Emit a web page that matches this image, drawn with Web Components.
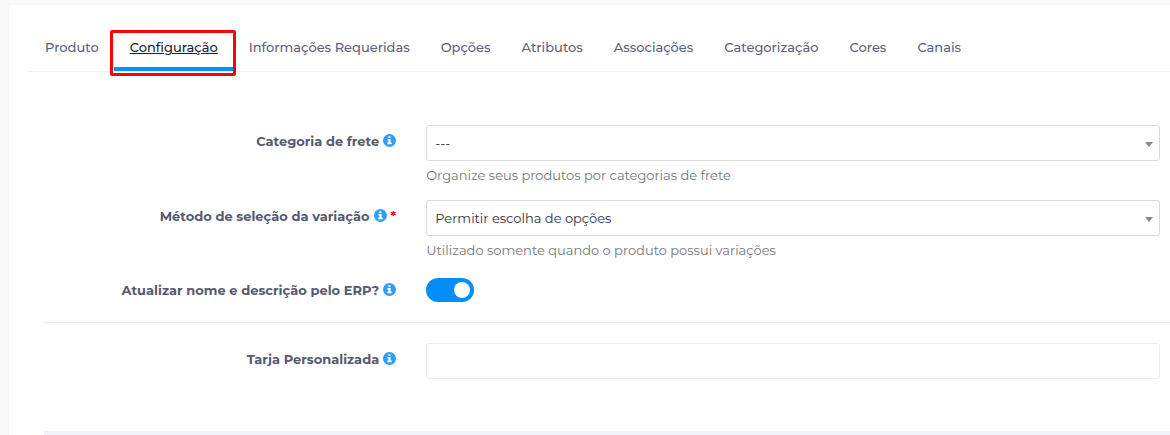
<!DOCTYPE html>
<html lang="pt-BR">
<head>
  <meta charset="utf-8">
  <meta name="viewport" content="width=device-width, initial-scale=1">
  <title>Produto - Configuração</title>
  <style>
    body {
      margin: 0;
      background-color: #f9f9f9;
      color: #575970;
      font-family: Montserrat, Inter, "Open Sans", sans-serif;
      font-size: 13px;
      line-height: 20px;
    }
  </style>
</head>
<body>
  <product-card>
    <tab-bar slot="tabs">
      <tab-link>Produto</tab-link>
      <tab-link active>Configuração</tab-link>
      <tab-link>Informações Requeridas</tab-link>
      <tab-link>Opções</tab-link>
      <tab-link>Atributos</tab-link>
      <tab-link>Associações</tab-link>
      <tab-link>Categorização</tab-link>
      <tab-link>Cores</tab-link>
      <tab-link>Canais</tab-link>
    </tab-bar>
    <form-field type="select" label="Categoria de frete" value="---" help="Organize seus produtos por categorias de frete"></form-field>
    <form-field type="select" label="Método de seleção da variação" value="Permitir escolha de opções" help="Utilizado somente quando o produto possui variações" required></form-field>
    <form-field type="switch" label="Atualizar nome e descrição pelo ERP?"></form-field>
    <form-divider></form-divider>
    <form-field type="text" label="Tarja Personalizada"></form-field>
  </product-card>

  <script>
    class ProductCard extends HTMLElement {
      constructor() {
        super();
        this.attachShadow({ mode: 'open' });
        this.shadowRoot.innerHTML = `
          <style>
            :host {
              display: block;
              margin: 5px 0 0 9px;
              padding-top: 25px;
              background-color: #fff;
            }

            form {
              display: flex;
              flex-direction: column;
              margin: 0 0 0 35px;
              padding: 53px 0 52px;
            }

            footer {
              height: 4px;
              margin-left: 35px;
              background-color: #f0f3f7;
            }
          </style>
          <slot name="tabs"></slot>
          <form><slot></slot></form>
          <footer></footer>
        `;
      }
    }

    class TabBar extends HTMLElement {
      constructor() {
        super();
        this.attachShadow({ mode: 'open' });
        this.shadowRoot.innerHTML = `
          <style>
            :host {
              display: block;
              margin-left: 20px;
            }

            nav {
              display: flex;
              border-bottom: 1px solid #f1f1f3;
            }
          </style>
          <nav><slot></slot></nav>
        `;
      }
    }

    class TabLink extends HTMLElement {
      constructor() {
        super();
        this.attachShadow({ mode: 'open' });
        this.shadowRoot.innerHTML = `
          <style>
            :host {
              display: block;
              position: relative;
            }

            a {
              display: block;
              padding: 7px 15px 10px 16px;
              border-bottom: 4px solid transparent;
              color: #5f6279;
              font-weight: 500;
              text-decoration: none;
              white-space: nowrap;
            }

            :host([active]) a {
              border-color: #0591fc;
              color: #1c1d2b;
              text-decoration: underline;
            }

            :host([active])::after {
              content: "";
              position: absolute;
              inset: 0 -3px -5px -4px;
              border: 3px solid #f00;
              border-radius: 2px;
              pointer-events: none;
            }
          </style>
          <a href="#"><slot></slot></a>
        `;
      }
    }

    class InfoIcon extends HTMLElement {
      constructor() {
        super();
        this.attachShadow({ mode: 'open' });
        this.shadowRoot.innerHTML = `
          <style>
            :host {
              display: block;
              padding-bottom: 2px;
            }

            svg {
              display: block;
            }
          </style>
          <svg width="13" height="13" viewBox="0 0 13 13" aria-hidden="true">
            <circle cx="6.5" cy="6.5" r="6.5" fill="#2f9dfb"/>
            <path fill="#fff" d="M5.3 2.2h2.2v1.8H5.3zM4.4 5h3.2v3.6h1v1.6H4.3V8.6h1.1V6.5h-1z"/>
          </svg>
        `;
      }
    }

    class FormField extends HTMLElement {
      constructor() {
        super();
        this.attachShadow({ mode: 'open' });
      }

      connectedCallback() {
        const help = this.getAttribute('help');
        const required = this.hasAttribute('required');

        this.shadowRoot.innerHTML = `
          <style>
            :host {
              display: grid;
              grid-template-columns: 12fr 25fr;
              column-gap: 30px;
              align-items: start;
              margin-right: 10px;
            }

            :host([type="switch"]) {
              padding-top: 3px;
            }

            .label {
              display: flex;
              justify-content: flex-end;
              align-items: center;
              gap: 4px;
              padding-top: 6px;
            }

            :host([type="switch"]) .label {
              padding-top: 2px;
            }

            label {
              font-weight: 700;
            }

            .required {
              color: #f00;
              font-weight: 700;
            }

            select,
            input[type="text"] {
              display: block;
              box-sizing: border-box;
              width: 100%;
              height: 36px;
              margin: 0;
              padding: 0 24px 0 8px;
              border: 1px solid #d9dadd;
              border-radius: 3px;
              background-color: #fff;
              color: #2f3040;
              font: inherit;
            }

            input[type="text"] {
              border-color: #ebecef;
            }

            select {
              appearance: none;
            }

            .select {
              display: grid;
              align-items: center;
            }

            .select > * {
              grid-area: 1 / 1;
            }

            .arrow {
              justify-self: end;
              margin: 3px 7px 0 0;
              border: solid transparent;
              border-width: 5px 4px 0;
              border-top-color: #888;
              pointer-events: none;
            }

            input[type="checkbox"] {
              appearance: none;
              display: flex;
              align-items: center;
              box-sizing: border-box;
              width: 48px;
              height: 24px;
              margin: 0;
              padding: 4px;
              border-radius: 12px;
              background-color: #ccc;
            }

            input[type="checkbox"]::before {
              content: "";
              width: 16px;
              height: 16px;
              border-radius: 8px;
              background-color: #fff;
            }

            input[type="checkbox"]:checked {
              justify-content: flex-end;
              background-color: #058dfb;
            }

            p {
              margin: 4px 0 15px;
              color: #74767d;
            }
          </style>
          <div class="label">
            <label for="control">${this.getAttribute('label')}</label>
            <info-icon></info-icon>
            ${required ? '<span class="required">*</span>' : ''}
          </div>
          <div>
            ${this.control()}
            ${help ? `<p>${help}</p>` : ''}
          </div>
        `;
      }

      control() {
        switch (this.getAttribute('type')) {
          case 'select':
            return `
              <div class="select">
                <select id="control"><option>${this.getAttribute('value')}</option></select>
                <span class="arrow"></span>
              </div>
            `;
          case 'switch':
            return '<input id="control" type="checkbox" checked>';
          default:
            return '<input id="control" type="text">';
        }
      }
    }

    class FormDivider extends HTMLElement {
      constructor() {
        super();
        this.attachShadow({ mode: 'open' });
        this.shadowRoot.innerHTML = `
          <style>
            :host {
              display: block;
              padding: 20px 0;
            }

            hr {
              margin: 0;
              border: 0;
              border-top: 1px solid #ebecef;
            }
          </style>
          <hr>
        `;
      }
    }

    customElements.define('product-card', ProductCard);
    customElements.define('tab-bar', TabBar);
    customElements.define('tab-link', TabLink);
    customElements.define('info-icon', InfoIcon);
    customElements.define('form-field', FormField);
    customElements.define('form-divider', FormDivider);
  </script>
</body>
</html>
